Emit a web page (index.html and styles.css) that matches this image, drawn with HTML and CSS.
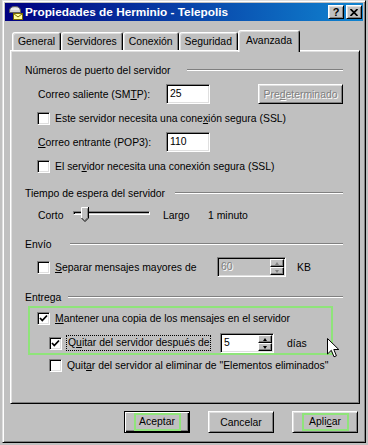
FILE: index.html
```html
<!DOCTYPE html>
<html lang="es">
  <head>
    <meta charset="UTF-8" />
    <title>Propiedades de Herminio - Telepolis</title>
    <link rel="stylesheet" href="styles.css">
  </head>
  <body>
    <div class="window">
      <div class="titlebar">
        <svg class="app-icon" width="16" height="16" viewBox="0 0 16 16">
          <path d="M1.5 7 Q1.5 2.5 7 2.5 Q12.5 2.5 12.5 7 L12.5 8.5 L1.5 8.5 Z" fill="#d8d8d8" stroke="#606060" />
          <path d="M3 5 H11" stroke="#fff" />
          <rect x="5.5" y="9.5" width="9" height="6" fill="#ffff9c" stroke="#7a6a00" />
          <path d="M5.5 9.5 L10 13 L14.5 9.5" fill="none" stroke="#7a6a00" />
        </svg>
        <span class="title">Propiedades de Herminio - Telepolis</span>
        <div class="title-buttons">
          <div class="title-btn">?</div>
          <div class="title-btn">
            <svg width="8" height="7" viewBox="0 0 8 7">
              <path d="M0.5 0 L7.5 7 M7.5 0 L0.5 7" stroke="#000" stroke-width="1.7" />
            </svg>
          </div>
        </div>
      </div>

      <div class="content">
        <div class="tabs">
          <div class="tab">General</div>
          <div class="tab">Servidores</div>
          <div class="tab">Conexión</div>
          <div class="tab">Seguridad</div>
          <div class="tab active">Avanzada</div>
        </div>

        <div class="panel">
          <div class="group-title first">
            <span class="w-ports">Números de puerto del servidor</span>
            <span class="rule"></span>
          </div>
          <div class="field-row">
            <span class="field-label">Correo saliente (SM<u>T</u>P):</span>
            <div class="textbox">25</div>
            <div class="btn small disabled">Pre<u>d</u>eterminado</div>
          </div>
          <div class="check-row">
            <span class="check"></span>
            <span>Este servidor necesita una cone<u>x</u>ión segura (SSL)</span>
          </div>
          <div class="field-row">
            <span class="field-label"><u>C</u>orreo entrante (POP3):</span>
            <div class="textbox">110</div>
          </div>
          <div class="check-row">
            <span class="check"></span>
            <span>El ser<u>v</u>idor necesita una conexión segura (SSL)</span>
          </div>

          <div class="group-title">
            <span class="w-timeout">Tiempo de espera del servidor</span>
            <span class="rule"></span>
          </div>
          <div class="slider-row">
            <span class="slider-min">Corto</span>
            <div class="slider">
              <div class="track"></div>
              <svg class="thumb" width="8" height="16" viewBox="0 0 8 16">
                <polygon points="0.5,0.5 7.5,0.5 7.5,11 4,14.5 0.5,11" fill="#c0c0c0" />
                <path d="M0.5 11.5 V0.5 H7" fill="none" stroke="#fff" />
                <path d="M7.5 0 V11 L4 14.5 L0.5 11" fill="none" stroke="#000" />
                <path d="M6.5 1.5 V10.5 L4 13" fill="none" stroke="#808080" />
              </svg>
            </div>
            <span class="slider-max">Largo</span>
            <span>1 minuto</span>
          </div>

          <div class="group-title">
            <span class="w-send">Envío</span>
            <span class="rule"></span>
          </div>
          <div class="check-row tall">
            <span class="check"></span>
            <span class="split-label"><u>S</u>eparar mensajes mayores de</span>
            <div class="spin disabled w-kb">
              <span class="spin-value">60</span>
              <div class="spin-btns">
                <div class="spin-btn"><span class="arrow-up"></span></div>
                <div class="spin-btn"><span class="arrow-down"></span></div>
              </div>
            </div>
            <span class="unit-kb">KB</span>
          </div>

          <div class="group-title">
            <span class="w-deliver">Entrega</span>
            <span class="rule"></span>
          </div>
          <div class="highlight">
            <div class="check-row">
              <span class="check checked">
                <svg width="9" height="9" viewBox="0 0 9 9"><path d="M1 4 L3.3 6.5 L8 1.5" fill="none" stroke="#000" stroke-width="1.8" /></svg>
              </span>
              <span><u>M</u>antener una copia de los mensajes en el servidor</span>
            </div>
            <div class="check-row tall sub">
              <span class="check checked">
                <svg width="9" height="9" viewBox="0 0 9 9"><path d="M1 4 L3.3 6.5 L8 1.5" fill="none" stroke="#000" stroke-width="1.8" /></svg>
              </span>
              <span class="focus">Q<u>u</u>itar del servidor después de</span>
              <div class="spin w-days">
                <span class="spin-value">5</span>
                <div class="spin-btns">
                  <div class="spin-btn"><span class="arrow-up"></span></div>
                  <div class="spin-btn"><span class="arrow-down"></span></div>
                </div>
              </div>
              <span class="unit-days">días</span>
            </div>
          </div>
          <div class="check-row sub">
            <span class="check"></span>
            <span>Quit<u>a</u>r del servidor al eliminar de "Elementos eliminados"</span>
          </div>
        </div>

        <div class="actions">
          <div class="btn default"><span class="mark">Aceptar</span></div>
          <div class="btn">Cancelar</div>
          <div class="btn"><span class="mark">Apli<u>c</u>ar</span></div>
        </div>
      </div>

      <svg class="cursor" width="13" height="21" viewBox="0 0 13 21">
        <path d="M0.5 0.5 L0.5 16 L4.3 12.3 L7 18.8 L9.4 17.8 L6.8 11.5 L11.8 11.5 Z" fill="#fff" stroke="#000" />
      </svg>
    </div>
  </body>
</html>
```

FILE: styles.css
```css
body {
  margin: 0;
  background: #c0c0c0;
  font-family: "Liberation Sans", Arial, sans-serif;
  font-size: 10.4px;
  color: #000;
}

.window {
  position: relative;
  box-sizing: border-box;
  width: 364px;
  height: 443px;
  margin-left: 2px;
  padding: 2px;
  background: #c0c0c0;
  border: 1px solid;
  border-color: #dfdfdf #000 #000 #dfdfdf;
  box-shadow: inset 1px 1px #fff, inset -1px -1px #808080;
}

/* title bar */

.titlebar {
  display: flex;
  align-items: center;
  height: 18px;
  padding: 0 1px 0 3px;
  background: linear-gradient(90deg, #000080, #1084d0);
  color: #fff;
}

.app-icon {
  flex: none;
  margin-right: 1px;
}

.title {
  flex: 1;
  font-size: 11.8px;
  font-weight: bold;
  white-space: nowrap;
}

.title-buttons {
  display: flex;
  gap: 2px;
}

.title-btn {
  display: flex;
  align-items: center;
  justify-content: center;
  box-sizing: border-box;
  width: 16px;
  height: 14px;
  background: #c0c0c0;
  border: 1px solid;
  border-color: #fff #000 #000 #fff;
  box-shadow: inset 1px 1px #dfdfdf, inset -1px -1px #808080;
  color: #000;
  font-size: 11px;
  font-weight: bold;
}

/* tabs */

.content {
  padding: 9px 3px 0 5px;
}

.tabs {
  position: relative;
  z-index: 1;
  display: flex;
  align-items: flex-end;
  height: 20px;
  padding-left: 2px;
}

.tab {
  display: flex;
  align-items: center;
  box-sizing: border-box;
  height: 18px;
  padding: 0 5px;
  background: #c0c0c0;
  border: 1px solid;
  border-bottom: none;
  border-color: #fff #000 transparent #fff;
  border-radius: 3px 3px 0 0;
  box-shadow: inset 1px 1px #dfdfdf, inset -1px 0 #808080;
}

.tab.active {
  height: 22px;
  margin-bottom: -2px;
  padding: 0 7px 2px;
}

/* panel */

.panel {
  box-sizing: border-box;
  width: 350px;
  height: 354px;
  padding: 12px 16px 0 14px;
  border: 1px solid;
  border-color: #fff #000 #000 #fff;
  box-shadow: inset 1px 1px #dfdfdf, inset -1px -1px #808080;
}

.group-title {
  display: flex;
  align-items: center;
  height: 14px;
  margin-top: 13px;
}

.group-title.first {
  margin-top: 0;
}

.rule {
  flex: 1;
  border-top: 1px solid #808080;
  border-bottom: 1px solid #fff;
}

.w-ports { width: 162px; }
.w-timeout { width: 150px; }
.w-send { width: 45px; }
.w-deliver { width: 43px; }

.field-row {
  display: flex;
  align-items: center;
  height: 20px;
  margin-top: 7px;
  padding-left: 13px;
}

.field-label {
  width: 128px;
}

.textbox {
  box-sizing: border-box;
  width: 44px;
  height: 20px;
  padding-left: 3px;
  line-height: 17px;
  background: #fff;
  border: 1px solid;
  border-color: #808080 #fff #fff #808080;
  box-shadow: inset 1px 1px #000, inset -1px -1px #dfdfdf;
}

.check-row {
  display: flex;
  align-items: center;
  height: 14px;
  margin-top: 7px;
  padding-left: 12px;
}

.check-row.tall {
  height: 20px;
  margin-top: 6px;
}

.check-row.sub {
  padding-left: 24px;
}

.check {
  display: flex;
  align-items: center;
  justify-content: center;
  box-sizing: border-box;
  width: 13px;
  height: 13px;
  margin-right: 5px;
  background: #fff;
  border: 1px solid;
  border-color: #808080 #fff #fff #808080;
  box-shadow: inset 1px 1px #000, inset -1px -1px #dfdfdf;
}

/* slider */

.slider-row {
  display: flex;
  align-items: center;
  height: 18px;
  margin-top: 6px;
  padding-left: 13px;
}

.slider-min {
  width: 35px;
}

.slider {
  position: relative;
  width: 77px;
  height: 18px;
}

.track {
  position: absolute;
  top: 5px;
  left: 0;
  right: 0;
  box-sizing: border-box;
  height: 4px;
  border: 1px solid;
  border-color: #808080 #fff #fff #808080;
  box-shadow: inset 1px 1px #000;
}

.thumb {
  position: absolute;
  top: 1px;
  left: 8px;
}

.slider-max {
  width: 45px;
  margin-left: 13px;
}

/* spin boxes */

.split-label {
  width: 162px;
}

.spin {
  display: flex;
  box-sizing: border-box;
  height: 20px;
  padding: 1px;
  background: #fff;
  border: 1px solid;
  border-color: #808080 #fff #fff #808080;
  box-shadow: inset 1px 1px #000, inset -1px -1px #dfdfdf;
}

.spin.disabled {
  background: #c0c0c0;
}

.w-kb { width: 69px; }
.w-days { width: 54px; margin-left: 9px; }

.spin-value {
  flex: 1;
  padding-left: 2px;
  line-height: 16px;
}

.spin.disabled .spin-value {
  color: #808080;
}

.spin-btns {
  display: flex;
  flex-direction: column;
  width: 14px;
}

.spin-btn {
  display: flex;
  flex: 1;
  align-items: center;
  justify-content: center;
  box-sizing: border-box;
  background: #c0c0c0;
  border: 1px solid;
  border-color: #fff #000 #000 #fff;
  box-shadow: inset -1px -1px #808080;
}

.arrow-up,
.arrow-down {
  width: 0;
  height: 0;
  border-left: 2.5px solid transparent;
  border-right: 2.5px solid transparent;
}

.arrow-up { border-bottom: 3px solid #000; }
.arrow-down { border-top: 3px solid #000; }

.spin.disabled .arrow-up { border-bottom-color: #808080; }
.spin.disabled .arrow-down { border-top-color: #808080; }

.unit-kb { margin-left: 11px; }
.unit-days { margin-left: 13px; }

.highlight {
  box-sizing: border-box;
  width: 305px;
  margin: 2px 0 0 3px;
  border: 2px solid #8fe47a;
}

.highlight .check-row {
  margin-top: 3px;
  padding-left: 7px;
}

.highlight .check-row.sub {
  margin-top: 8px;
  padding-left: 19px;
}

.highlight + .check-row {
  margin-top: 3px;
}

.focus {
  box-sizing: border-box;
  width: 145px;
  margin-left: -1px;
  padding: 0 1px;
  line-height: 14px;
  border: 1px dotted #000;
  white-space: nowrap;
}

/* buttons */

.btn {
  display: flex;
  align-items: center;
  justify-content: center;
  box-sizing: border-box;
  width: 66px;
  height: 22px;
  background: #c0c0c0;
  border: 1px solid;
  border-color: #fff #000 #000 #fff;
  box-shadow: inset 1px 1px #dfdfdf, inset -1px -1px #808080;
}

.btn.small {
  width: 85px;
  height: 20px;
  margin-left: auto;
}

.btn.default {
  border-color: #000;
  box-shadow: inset 1px 1px #fff, inset -1px -1px #000, inset -2px -2px #808080;
}

.disabled {
  color: #808080;
  text-shadow: 1px 1px #fff;
}

.actions {
  display: flex;
  justify-content: flex-end;
  gap: 18px;
  margin-top: 7px;
  padding-right: 2px;
}

.mark {
  box-sizing: border-box;
  width: 47px;
  height: 18px;
  line-height: 14px;
  text-align: center;
  border: 2px solid #8fe47a;
}

.cursor {
  position: absolute;
  top: 337px;
  left: 324px;
}
```
